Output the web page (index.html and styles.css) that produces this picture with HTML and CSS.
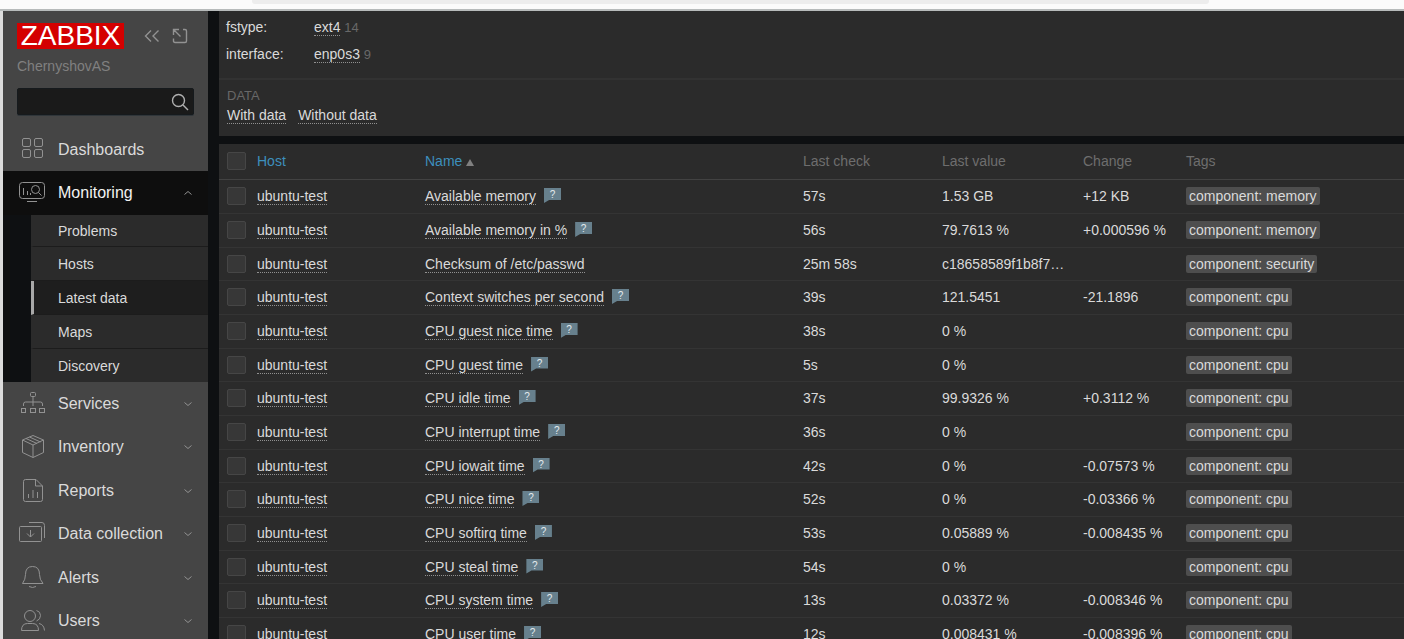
FILE: index.html
```
<!DOCTYPE html>
<html lang="en">
<head>
<meta charset="utf-8">
<meta name="viewport" content="width=device-width, initial-scale=1">
<title>Latest data</title>
<link rel="stylesheet" href="styles.css">
</head>
<body>
<div class="browser-bar"><div class="address"></div></div>
<div class="app">
  <aside class="sidebar">
    <div class="brand">
      <a class="logo" href="#">ZABBIX</a>
      <button class="icon-button" aria-label="Collapse sidebar"><svg width="16" height="14" viewBox="0 0 16 14"><path d="M7 1.500 1.500 7 7 12.500M14.500 1.500 9 7l5.500 5.500"/></svg></button>
      <button class="icon-button" aria-label="Hide sidebar"><svg width="16" height="16" viewBox="0 0 16 16"><path d="M11 1.500h2q1.500 0 1.500 1.500v10q0 1.500-1.500 1.500H3q-1.500 0-1.500-1.500v-2.500M1.500 7V1.500H7M2 2l6.500 6.500"/></svg></button>
    </div>
    <div class="server">ChernyshovAS</div>
    <form class="search">
      <input type="text" class="search-input" aria-label="Search">
      <button type="button" class="icon-button search-button" aria-label="Run search"><svg width="18" height="18" viewBox="0 0 18 18"><circle cx="7.500" cy="7.500" r="6"/><path d="m12 12 5 5"/></svg></button>
    </form>
    <nav>
      <ul class="menu">
        <li><a class="item" href="#"><svg class="icon" viewBox="0 0 28 26"><rect x="3.500" y="1.500" width="8" height="8" rx="1.500"/><rect x="15.500" y="1.500" width="8" height="8" rx="1.500"/><rect x="3.500" y="12.500" width="8" height="8" rx="1.500"/><rect x="15.500" y="12.500" width="8" height="8" rx="1.500"/></svg><span>Dashboards</span></a></li>
        <li class="open"><a class="item" href="#"><svg class="icon" viewBox="0 0 28 26"><rect x="0.500" y="2.500" width="25" height="16" rx="3"/><path d="M4.500 8v7M8.500 11v4M11.500 13v2M8 21.500h10"/><circle cx="16.500" cy="9.500" r="4"/><path d="m19.500 12.500 3 3"/></svg><span>Monitoring</span><svg class="chevron" viewBox="0 0 8 6"><path d="m.5 4.500 3.500-3 3.500 3"/></svg></a>
          <ul class="submenu">
            <li><a href="#">Problems</a></li>
            <li><a href="#">Hosts</a></li>
            <li><a href="#" class="current" aria-current="page">Latest data</a></li>
            <li><a href="#">Maps</a></li>
            <li><a href="#">Discovery</a></li>
          </ul>
        </li>
        <li><a class="item" href="#"><svg class="icon" viewBox="0 0 28 26"><rect x="11.500" y="1.500" width="5" height="4" rx="1"/><rect x="2.500" y="17.500" width="4" height="4"/><rect x="11.500" y="17.500" width="5" height="4"/><rect x="20.500" y="17.500" width="5" height="4"/><path d="M14 6v9M4.500 15v-2q0-2 2-2h15q2 0 2 2v2"/></svg><span>Services</span><svg class="chevron" viewBox="0 0 8 6"><path d="m.5 1.500 3.500 3 3.500-3"/></svg></a></li>
        <li><a class="item" href="#"><svg class="icon" viewBox="0 0 28 26"><path d="m14 1.500 10.500 4.500v12.500L14 23.500 3.500 18.500V6zM3.500 6 14 11l10.500-5M14 11v12.500M7 4.500 18 9.500M10.500 3 21.500 8"/></svg><span>Inventory</span><svg class="chevron" viewBox="0 0 8 6"><path d="m.5 1.500 3.500 3 3.500-3"/></svg></a></li>
        <li><a class="item" href="#"><svg class="icon" viewBox="0 0 28 26"><path d="M17 1.500H6.500q-2 0-2 2v18q0 2 2 2h15q2 0 2-2V8zM16.500 1.500V8h7M9.500 16v4M14 12v8M18.500 14v6"/></svg><span>Reports</span><svg class="chevron" viewBox="0 0 8 6"><path d="m.5 1.500 3.500 3 3.500-3"/></svg></a></li>
        <li><a class="item" href="#"><svg class="icon" viewBox="0 0 28 26"><rect x="0.500" y="5.500" width="22" height="15" rx="1"/><path d="M10 1.500h13q2.500 0 2.500 3V17M11.500 9v7M8 12.500l3.500 3.500 3.500-3.500"/></svg><span>Data collection</span><svg class="chevron" viewBox="0 0 8 6"><path d="m.5 1.500 3.500 3 3.500-3"/></svg></a></li>
        <li><a class="item" href="#"><svg class="icon" viewBox="0 0 28 26"><path d="M3.500 18.500q3-4 3-9 0-8 7-8t7 8q0 5 3.500 9zM10 21.500q3.500 2 7 0"/></svg><span>Alerts</span><svg class="chevron" viewBox="0 0 8 6"><path d="m.5 1.500 3.500 3 3.500-3"/></svg></a></li>
        <li><a class="item" href="#"><svg class="icon" viewBox="0 0 28 26"><circle cx="11" cy="8" r="5.500"/><path d="M2.500 22.500q0-7 6-7h5q6 0 6 7zM17.500 2.500q4 1 4 5t-4 5.500M20 15.500q5 1 5.500 7"/></svg><span>Users</span><svg class="chevron" viewBox="0 0 8 6"><path d="m.5 1.500 3.500 3 3.500-3"/></svg></a></li>
      </ul>
    </nav>
  </aside>
  <main class="content">
    <section class="filter">
      <dl class="tag-values">
        <dt>fstype:</dt><dd><a class="link" href="#">ext4</a> <span class="count">14</span></dd>
        <dt>interface:</dt><dd><a class="link" href="#">enp0s3</a> <span class="count">9</span></dd>
      </dl>
      <div class="data-filter">
        <h4>DATA</h4>
        <div class="data-links"><a class="link" href="#">With data</a><a class="link" href="#">Without data</a></div>
      </div>
    </section>
    <section class="panel">
      <table class="items">
        <colgroup><col class="c-check"><col class="c-host"><col class="c-name"><col class="c-last"><col class="c-value"><col class="c-change"><col></colgroup>
        <thead><tr><th><input type="checkbox" aria-label="Select all"></th><th><a class="sort" href="#">Host</a></th><th><a class="sort" href="#">Name<span class="arrow"></span></a></th><th>Last check</th><th>Last value</th><th>Change</th><th>Tags</th></tr></thead>
        <tbody>
          <tr><td><input type="checkbox" aria-label="Available memory"></td><td><a class="link" href="#">ubuntu-test</a></td><td><a class="link" href="#">Available memory</a><button class="hint">?</button></td><td>57s</td><td>1.53 GB</td><td>+12 KB</td><td><span class="tag">component: memory</span></td></tr>
          <tr><td><input type="checkbox" aria-label="Available memory in %"></td><td><a class="link" href="#">ubuntu-test</a></td><td><a class="link" href="#">Available memory in %</a><button class="hint">?</button></td><td>56s</td><td>79.7613 %</td><td>+0.000596 %</td><td><span class="tag">component: memory</span></td></tr>
          <tr><td><input type="checkbox" aria-label="Checksum of /etc/passwd"></td><td><a class="link" href="#">ubuntu-test</a></td><td><a class="link" href="#">Checksum of /etc/passwd</a></td><td>25m 58s</td><td>c18658589f1b8f7…</td><td></td><td><span class="tag">component: security</span></td></tr>
          <tr><td><input type="checkbox" aria-label="Context switches per second"></td><td><a class="link" href="#">ubuntu-test</a></td><td><a class="link" href="#">Context switches per second</a><button class="hint">?</button></td><td>39s</td><td>121.5451</td><td>-21.1896</td><td><span class="tag">component: cpu</span></td></tr>
          <tr><td><input type="checkbox" aria-label="CPU guest nice time"></td><td><a class="link" href="#">ubuntu-test</a></td><td><a class="link" href="#">CPU guest nice time</a><button class="hint">?</button></td><td>38s</td><td>0 %</td><td></td><td><span class="tag">component: cpu</span></td></tr>
          <tr><td><input type="checkbox" aria-label="CPU guest time"></td><td><a class="link" href="#">ubuntu-test</a></td><td><a class="link" href="#">CPU guest time</a><button class="hint">?</button></td><td>5s</td><td>0 %</td><td></td><td><span class="tag">component: cpu</span></td></tr>
          <tr><td><input type="checkbox" aria-label="CPU idle time"></td><td><a class="link" href="#">ubuntu-test</a></td><td><a class="link" href="#">CPU idle time</a><button class="hint">?</button></td><td>37s</td><td>99.9326 %</td><td>+0.3112 %</td><td><span class="tag">component: cpu</span></td></tr>
          <tr><td><input type="checkbox" aria-label="CPU interrupt time"></td><td><a class="link" href="#">ubuntu-test</a></td><td><a class="link" href="#">CPU interrupt time</a><button class="hint">?</button></td><td>36s</td><td>0 %</td><td></td><td><span class="tag">component: cpu</span></td></tr>
          <tr><td><input type="checkbox" aria-label="CPU iowait time"></td><td><a class="link" href="#">ubuntu-test</a></td><td><a class="link" href="#">CPU iowait time</a><button class="hint">?</button></td><td>42s</td><td>0 %</td><td>-0.07573 %</td><td><span class="tag">component: cpu</span></td></tr>
          <tr><td><input type="checkbox" aria-label="CPU nice time"></td><td><a class="link" href="#">ubuntu-test</a></td><td><a class="link" href="#">CPU nice time</a><button class="hint">?</button></td><td>52s</td><td>0 %</td><td>-0.03366 %</td><td><span class="tag">component: cpu</span></td></tr>
          <tr><td><input type="checkbox" aria-label="CPU softirq time"></td><td><a class="link" href="#">ubuntu-test</a></td><td><a class="link" href="#">CPU softirq time</a><button class="hint">?</button></td><td>53s</td><td>0.05889 %</td><td>-0.008435 %</td><td><span class="tag">component: cpu</span></td></tr>
          <tr><td><input type="checkbox" aria-label="CPU steal time"></td><td><a class="link" href="#">ubuntu-test</a></td><td><a class="link" href="#">CPU steal time</a><button class="hint">?</button></td><td>54s</td><td>0 %</td><td></td><td><span class="tag">component: cpu</span></td></tr>
          <tr><td><input type="checkbox" aria-label="CPU system time"></td><td><a class="link" href="#">ubuntu-test</a></td><td><a class="link" href="#">CPU system time</a><button class="hint">?</button></td><td>13s</td><td>0.03372 %</td><td>-0.008346 %</td><td><span class="tag">component: cpu</span></td></tr>
          <tr><td><input type="checkbox" aria-label="CPU user time"></td><td><a class="link" href="#">ubuntu-test</a></td><td><a class="link" href="#">CPU user time</a><button class="hint">?</button></td><td>12s</td><td>0.008431 %</td><td>-0.008396 %</td><td><span class="tag">component: cpu</span></td></tr>
        </tbody>
      </table>
    </section>
  </main>
</div>
</body>
</html>
```
FILE: styles.css
```
* { box-sizing: border-box; }

body {
  margin: 0;
  height: 100vh;
  display: flex;
  flex-direction: column;
  overflow: hidden;
  background: #0e1012;
  color: #dadada;
  font: 14px/16px "Liberation Sans", Arial, sans-serif;
}

a { color: inherit; text-decoration: none; }
ul { list-style: none; margin: 0; padding: 0; }
button { font-family: inherit; border: 0; padding: 0; }
svg { fill: none; stroke: #929292; stroke-width: 1; flex: none; }

/* Browser frame */
.browser-bar {
  flex: none;
  height: 11px;
  padding: 0 195px 0 252px;
  background: #fbfbfb;
  border-bottom: 2px solid #b7bbbb;
}
.address { height: 4px; background: #ededed; border-radius: 0 0 3px 3px; }

.app {
  flex: 1;
  min-height: 0;
  display: flex;
  border-left: 3px solid #dcdcdc;
}

/* Sidebar */
.sidebar {
  flex: none;
  width: 205px;
  overflow: hidden;
  background: #454545;
}
.brand {
  display: flex;
  align-items: center;
  gap: 12px;
  padding: 12px 20px 0 14px;
}
.logo {
  flex: none;
  width: 107px;
  margin-right: 8px;
  background: #d40000;
  color: #fff;
  font-size: 28px;
  line-height: 26px;
  text-align: center;
}
.icon-button { display: flex; background: none; }
.brand svg { stroke-width: 1.4; }
.server { margin: 9px 14px 0; color: #808080; }
.search {
  display: flex;
  align-items: center;
  height: 27px;
  margin: 14px 14px 13px;
  padding-right: 4px;
  background: #1a1a1a;
  border: 1px solid #161a1d;
  border-radius: 2px;
  box-shadow: 0 1px 0 #30363a;
}
.search-input {
  flex: 1;
  min-width: 0;
  height: 24px;
  background: none;
  border: 0;
  color: inherit;
}
.search-button svg { stroke: #b0b0b0; stroke-width: 1.4; }

.item {
  display: flex;
  align-items: center;
  height: 43px;
  padding: 0 16px;
  font-size: 16px;
}
.menu > li:nth-child(even) > .item { height: 44px; }
.item span { flex: 1; margin-left: 11px; }
.icon { width: 28px; height: 26px; }
.chevron { width: 8px; height: 6px; }
.open > .item { background: #0e0e0e; color: #f2f2f2; }

.submenu { padding-left: 28px; background: #0e1012; }
.submenu a {
  display: flex;
  align-items: center;
  height: 34px;
  padding-left: 24px;
  background: #2b2b2b;
  border-left: 3px solid #2b2b2b;
  border-bottom: 1px solid #1c1c1c;
}
.submenu li:first-child a { height: 32px; }
.submenu li:last-child a { height: 33px; border-bottom: 0; }
.submenu .current { background: #1e1e1e; border-left-color: #a8a8a8; }

/* Content */
.content {
  flex: 1;
  min-width: 0;
  display: flex;
  flex-direction: column;
  gap: 8px;
  margin-left: 11px;
}
.filter { flex: none; background: #2b2b2b; }
.link { border-bottom: 1px dotted #909090; }

.tag-values {
  display: grid;
  grid-template-columns: 88px 1fr;
  row-gap: 11px;
  margin: 0;
  padding: 8px 7px 16px;
  border-bottom: 2px solid #323232;
}
.tag-values dt, .tag-values dd { margin: 0; height: 16px; }
.count { color: #686868; font-size: 13px; }

.data-filter { padding: 8px 8px 12px; }
.data-filter h4 {
  margin: 0 0 4px;
  color: #686868;
  font-size: 13px;
  font-weight: normal;
}
.data-links { display: flex; gap: 12px; }
.data-links .link { line-height: 15px; }

/* Items table */
.panel { flex: 1; min-height: 0; overflow: hidden; background: #2b2b2b; }
.items { width: 100%; table-layout: fixed; border-collapse: collapse; }
.c-check { width: 38px; }
.c-host { width: 168px; }
.c-name { width: 378px; }
.c-last { width: 139px; }
.c-value { width: 141px; }
.c-change { width: 103px; }

.items th, .items td {
  height: 34px;
  padding: 0;
  border-bottom: 1px solid #343434;
  text-align: left;
  font-weight: normal;
  white-space: nowrap;
}
.items tr:nth-child(3n) td { height: 33px; }
.items th { height: 35px; color: #6e6e6e; border-bottom: 1px solid #424242; }
.items th:first-child, .items td:first-child { padding-left: 8px; }

.items input {
  appearance: none;
  display: block;
  width: 19px;
  height: 18px;
  margin: 0;
  background: #373737;
  border: 1px solid #464646;
  border-radius: 2px;
}
.sort { color: #3d8fbd; }
.arrow {
  display: inline-block;
  margin-left: 4px;
  border: 4px solid transparent;
  border-top: 0;
  border-bottom: 7px solid #808080;
}
.hint {
  width: 17px;
  height: 15px;
  margin-left: 8px;
  padding-bottom: 2px;
  vertical-align: text-top;
  background: #67808d;
  color: #e4eaed;
  font-size: 10px;
  line-height: 13px;
  clip-path: polygon(0 0, 100% 0, 100% 80%, 30% 80%, 0 100%);
}
.tag {
  display: inline-block;
  padding: 1px 3px;
  background: #4e4e4e;
  border-radius: 2px;
}
```
